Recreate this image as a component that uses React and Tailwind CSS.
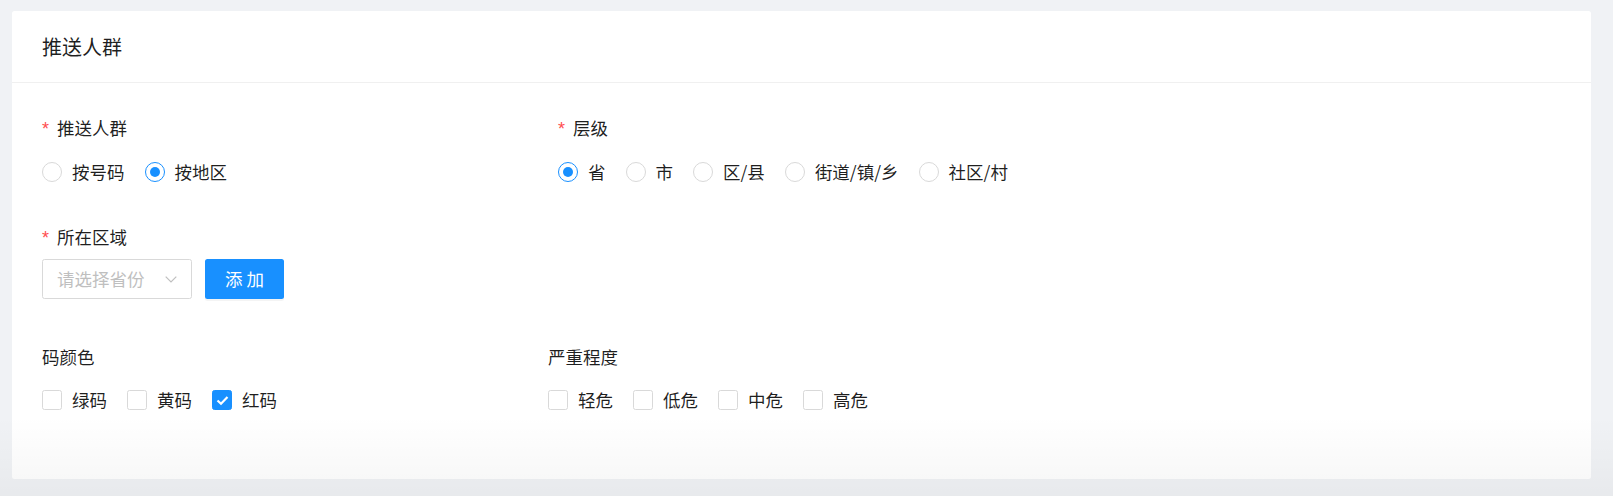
import React from "react";

const font = { fontFamily: '"Noto Sans CJK SC", "Noto Sans", sans-serif' };

function Radio({ label, checked }) {
  return (
    <label className="flex items-center mr-[10px]">
      <span
        className={
          "w-[20px] h-[20px] rounded-full border flex items-center justify-center shrink-0 bg-white " +
          (checked ? "border-[#1890ff]" : "border-[#d9d9d9]")
        }
      >
        {checked && <span className="w-[10px] h-[10px] rounded-full bg-[#1890ff]" />}
      </span>
      <span className="px-[10px] whitespace-nowrap">{label}</span>
    </label>
  );
}

function Checkbox({ label, checked }) {
  return (
    <label className="flex items-center mr-[10px]">
      <span
        className={
          "w-[20px] h-[20px] rounded-[2.5px] border flex items-center justify-center shrink-0 " +
          (checked ? "border-[#1890ff] bg-[#1890ff]" : "border-[#d9d9d9] bg-white")
        }
      >
        {checked && (
          <svg width="13" height="11" viewBox="0 0 13 11">
            <polyline points="1.5,5.5 5,8.8 11.5,2" fill="none" stroke="white" strokeWidth="2.2" />
          </svg>
        )}
      </span>
      <span className="px-[10px] whitespace-nowrap">{label}</span>
    </label>
  );
}

function Label({ children, required }) {
  return (
    <div className="h-[28px] flex items-center">
      {required && (
        <span className="w-[15px] text-[#ff4d4f] text-[18px] leading-none pt-[2px]" style={{ fontFamily: '"Liberation Sans", sans-serif' }}>
          *
        </span>
      )}
      <span>{children}</span>
    </div>
  );
}

export default function App() {
  return (
    <div
      className="relative h-[496px] bg-[#f0f2f5] pt-[11px] pl-[12px] pr-[22px] text-[17.5px] text-[rgba(0,0,0,0.88)] overflow-hidden"
      style={font}
    >
      <div className="bg-white rounded-[2.5px]">
        <div className="h-[72px] px-[30px] flex items-center border-b border-[#f0f0f0] text-[20px]">
          推送人群
        </div>
        <div className="px-[30px] pt-[31px] pb-[65px]">
          <div className="flex">
            <div className="w-[516px] flex flex-col gap-[16px]">
              <Label required>推送人群</Label>
              <div className="h-[28px] flex items-center">
                <Radio label="按号码" />
                <Radio label="按地区" checked />
              </div>
            </div>
            <div className="flex flex-col gap-[16px]">
              <Label required>层级</Label>
              <div className="h-[28px] flex items-center">
                <Radio label="省" checked />
                <Radio label="市" />
                <Radio label="区/县" />
                <Radio label="街道/镇/乡" />
                <Radio label="社区/村" />
              </div>
            </div>
          </div>

          <div className="mt-[37px] flex flex-col gap-[8px]">
            <Label required>所在区域</Label>
            <div className="flex items-center gap-[13px]">
              <div className="w-[150px] h-[40px] border border-[#d9d9d9] rounded-[2.5px] flex items-center justify-between pl-[14px] pr-[14px] bg-white">
                <span className="text-[#bfbfbf]">请选择省份</span>
                <svg width="12" height="7" viewBox="0 0 12 7">
                  <polyline points="0.7,0.7 6,6 11.3,0.7" fill="none" stroke="#bfbfbf" strokeWidth="1.2" />
                </svg>
              </div>
              <button className="w-[79px] h-[40px] bg-[#1890ff] text-white rounded-[2.5px] flex items-center justify-center shadow-[0_2px_0_rgba(0,0,0,0.045)]">
                添 加
              </button>
            </div>
          </div>

          <div className="mt-[44px] flex">
            <div className="w-[506px] flex flex-col gap-[15px]">
              <Label>码颜色</Label>
              <div className="h-[28px] flex items-center">
                <Checkbox label="绿码" />
                <Checkbox label="黄码" />
                <Checkbox label="红码" checked />
              </div>
            </div>
            <div className="flex flex-col gap-[15px]">
              <Label>严重程度</Label>
              <div className="h-[28px] flex items-center">
                <Checkbox label="轻危" />
                <Checkbox label="低危" />
                <Checkbox label="中危" />
                <Checkbox label="高危" />
              </div>
            </div>
          </div>
        </div>
      </div>
      <div className="pointer-events-none absolute left-0 right-0 bottom-0 h-[80px] bg-linear-to-b from-transparent to-black/[0.035]" />
    </div>
  );
}
